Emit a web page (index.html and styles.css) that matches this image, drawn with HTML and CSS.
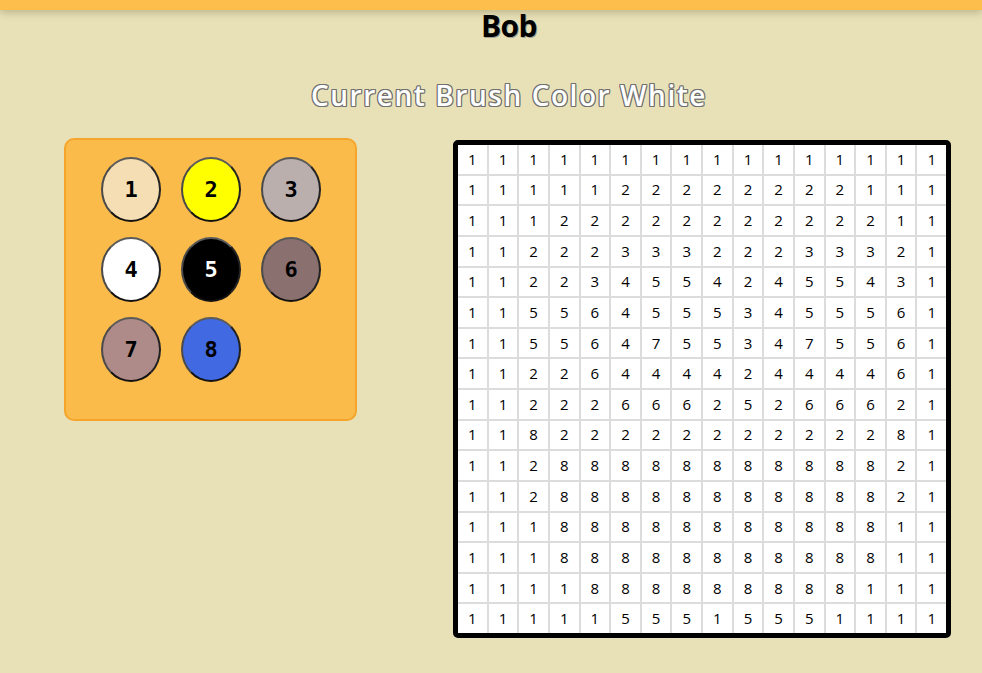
FILE: index.html
```html
<!DOCTYPE html>
<html lang="en">
<head>
<meta charset="utf-8">
<title>Bob</title>
<link rel="stylesheet" href="styles.css">
</head>
<body>
<header class="topbar"></header>
<main class="page">
  <h1 class="name">Bob</h1>
  <h2 class="brush">Current Brush Color White</h2>
  <div class="workspace">
    <div class="palette">
      <button class="swatch c1">1</button>
      <button class="swatch c2">2</button>
      <button class="swatch c3">3</button>
      <button class="swatch c4">4</button>
      <button class="swatch c5">5</button>
      <button class="swatch c6">6</button>
      <button class="swatch c7">7</button>
      <button class="swatch c8">8</button>
    </div>
    <div class="canvas">
      <div class="cell">1</div><div class="cell">1</div><div class="cell">1</div><div class="cell">1</div><div class="cell">1</div><div class="cell">1</div><div class="cell">1</div><div class="cell">1</div><div class="cell">1</div><div class="cell">1</div><div class="cell">1</div><div class="cell">1</div><div class="cell">1</div><div class="cell">1</div><div class="cell">1</div><div class="cell">1</div>
      <div class="cell">1</div><div class="cell">1</div><div class="cell">1</div><div class="cell">1</div><div class="cell">1</div><div class="cell">2</div><div class="cell">2</div><div class="cell">2</div><div class="cell">2</div><div class="cell">2</div><div class="cell">2</div><div class="cell">2</div><div class="cell">2</div><div class="cell">1</div><div class="cell">1</div><div class="cell">1</div>
      <div class="cell">1</div><div class="cell">1</div><div class="cell">1</div><div class="cell">2</div><div class="cell">2</div><div class="cell">2</div><div class="cell">2</div><div class="cell">2</div><div class="cell">2</div><div class="cell">2</div><div class="cell">2</div><div class="cell">2</div><div class="cell">2</div><div class="cell">2</div><div class="cell">1</div><div class="cell">1</div>
      <div class="cell">1</div><div class="cell">1</div><div class="cell">2</div><div class="cell">2</div><div class="cell">2</div><div class="cell">3</div><div class="cell">3</div><div class="cell">3</div><div class="cell">2</div><div class="cell">2</div><div class="cell">2</div><div class="cell">3</div><div class="cell">3</div><div class="cell">3</div><div class="cell">2</div><div class="cell">1</div>
      <div class="cell">1</div><div class="cell">1</div><div class="cell">2</div><div class="cell">2</div><div class="cell">3</div><div class="cell">4</div><div class="cell">5</div><div class="cell">5</div><div class="cell">4</div><div class="cell">2</div><div class="cell">4</div><div class="cell">5</div><div class="cell">5</div><div class="cell">4</div><div class="cell">3</div><div class="cell">1</div>
      <div class="cell">1</div><div class="cell">1</div><div class="cell">5</div><div class="cell">5</div><div class="cell">6</div><div class="cell">4</div><div class="cell">5</div><div class="cell">5</div><div class="cell">5</div><div class="cell">3</div><div class="cell">4</div><div class="cell">5</div><div class="cell">5</div><div class="cell">5</div><div class="cell">6</div><div class="cell">1</div>
      <div class="cell">1</div><div class="cell">1</div><div class="cell">5</div><div class="cell">5</div><div class="cell">6</div><div class="cell">4</div><div class="cell">7</div><div class="cell">5</div><div class="cell">5</div><div class="cell">3</div><div class="cell">4</div><div class="cell">7</div><div class="cell">5</div><div class="cell">5</div><div class="cell">6</div><div class="cell">1</div>
      <div class="cell">1</div><div class="cell">1</div><div class="cell">2</div><div class="cell">2</div><div class="cell">6</div><div class="cell">4</div><div class="cell">4</div><div class="cell">4</div><div class="cell">4</div><div class="cell">2</div><div class="cell">4</div><div class="cell">4</div><div class="cell">4</div><div class="cell">4</div><div class="cell">6</div><div class="cell">1</div>
      <div class="cell">1</div><div class="cell">1</div><div class="cell">2</div><div class="cell">2</div><div class="cell">2</div><div class="cell">6</div><div class="cell">6</div><div class="cell">6</div><div class="cell">2</div><div class="cell">5</div><div class="cell">2</div><div class="cell">6</div><div class="cell">6</div><div class="cell">6</div><div class="cell">2</div><div class="cell">1</div>
      <div class="cell">1</div><div class="cell">1</div><div class="cell">8</div><div class="cell">2</div><div class="cell">2</div><div class="cell">2</div><div class="cell">2</div><div class="cell">2</div><div class="cell">2</div><div class="cell">2</div><div class="cell">2</div><div class="cell">2</div><div class="cell">2</div><div class="cell">2</div><div class="cell">8</div><div class="cell">1</div>
      <div class="cell">1</div><div class="cell">1</div><div class="cell">2</div><div class="cell">8</div><div class="cell">8</div><div class="cell">8</div><div class="cell">8</div><div class="cell">8</div><div class="cell">8</div><div class="cell">8</div><div class="cell">8</div><div class="cell">8</div><div class="cell">8</div><div class="cell">8</div><div class="cell">2</div><div class="cell">1</div>
      <div class="cell">1</div><div class="cell">1</div><div class="cell">2</div><div class="cell">8</div><div class="cell">8</div><div class="cell">8</div><div class="cell">8</div><div class="cell">8</div><div class="cell">8</div><div class="cell">8</div><div class="cell">8</div><div class="cell">8</div><div class="cell">8</div><div class="cell">8</div><div class="cell">2</div><div class="cell">1</div>
      <div class="cell">1</div><div class="cell">1</div><div class="cell">1</div><div class="cell">8</div><div class="cell">8</div><div class="cell">8</div><div class="cell">8</div><div class="cell">8</div><div class="cell">8</div><div class="cell">8</div><div class="cell">8</div><div class="cell">8</div><div class="cell">8</div><div class="cell">8</div><div class="cell">1</div><div class="cell">1</div>
      <div class="cell">1</div><div class="cell">1</div><div class="cell">1</div><div class="cell">8</div><div class="cell">8</div><div class="cell">8</div><div class="cell">8</div><div class="cell">8</div><div class="cell">8</div><div class="cell">8</div><div class="cell">8</div><div class="cell">8</div><div class="cell">8</div><div class="cell">8</div><div class="cell">1</div><div class="cell">1</div>
      <div class="cell">1</div><div class="cell">1</div><div class="cell">1</div><div class="cell">1</div><div class="cell">8</div><div class="cell">8</div><div class="cell">8</div><div class="cell">8</div><div class="cell">8</div><div class="cell">8</div><div class="cell">8</div><div class="cell">8</div><div class="cell">8</div><div class="cell">1</div><div class="cell">1</div><div class="cell">1</div>
      <div class="cell">1</div><div class="cell">1</div><div class="cell">1</div><div class="cell">1</div><div class="cell">1</div><div class="cell">5</div><div class="cell">5</div><div class="cell">5</div><div class="cell">1</div><div class="cell">5</div><div class="cell">5</div><div class="cell">5</div><div class="cell">1</div><div class="cell">1</div><div class="cell">1</div><div class="cell">1</div>
    </div>
  </div>
</main>
</body>
</html>
```

FILE: styles.css
```css
html, body {
  margin: 0;
  padding: 0;
}

body {
  background: #e8e1b7;
  font-family: "Open Sans", "Noto Sans", sans-serif;
  color: #000;
  height: 673px;
  overflow: hidden;
}

.topbar {
  height: 10px;
  background: #fdbe4b;
  box-shadow: 0 2px 8px rgba(90, 80, 40, 0.35);
  position: relative;
}

.page {
  padding-left: 36px;
}

.name {
  margin: 0;
  text-align: center;
  font-size: 30px;
  line-height: 32px;
  font-weight: 700;
  letter-spacing: -0.5px;
  text-shadow: 1px 1px 0 rgba(20, 40, 80, 0.35);
}

.brush {
  margin: 34px 0 0;
  text-align: center;
  font-size: 28px;
  line-height: 38px;
  font-weight: 600;
  letter-spacing: 1.55px;
  color: #fff;
  text-shadow:
    -1px -1px 0 #707070,
    1px -1px 0 #707070,
    -1px 1px 0 #707070,
    1px 1px 0 #707070,
    0 1px 0 #707070,
    0 -1px 0 #707070,
    1px 0 0 #707070,
    -1px 0 0 #707070;
}

.workspace {
  display: flex;
  align-items: flex-start;
  margin-top: 24px;
  padding-left: 28px;
  gap: 96px;
}

.palette {
  box-sizing: border-box;
  width: 293px;
  height: 283px;
  background: #fbbb4b;
  border: 2px solid #f5a52c;
  border-radius: 10px;
  padding: 17px 0 0 35px;
  display: grid;
  grid-template-columns: repeat(3, 60px);
  grid-auto-rows: 65px;
  column-gap: 20px;
  row-gap: 15px;
  align-content: start;
}

.swatch {
  box-sizing: border-box;
  width: 60px;
  height: 65px;
  margin: 0;
  padding: 0;
  border-radius: 50%;
  border: 2px solid;
  border-color: #5a5a5a #222 #111 #4a4a4a;
  font-family: "DejaVu Sans Mono", "Liberation Mono", monospace;
  font-weight: 700;
  font-size: 22px;
  color: #000;
  cursor: pointer;
}

.c1 { background: #f5deb3; }
.c2 { background: #ffff00; }
.c3 { background: #bbafad; }
.c4 { background: #ffffff; }
.c5 { background: #000000; color: #fff; }
.c6 { background: #8b7070; }
.c7 { background: #ae8b88; }
.c8 { background: #4169e1; }

.canvas {
  margin-top: 2px;
  width: 488px;
  height: 488px;
  border: 5px solid #000;
  border-radius: 5px;
  background: #dcdcdc;
  display: grid;
  grid-template-columns: repeat(16, 1fr);
  grid-template-rows: repeat(16, 1fr);
  gap: 2px;
}

.cell {
  background: #fff;
  display: flex;
  align-items: center;
  justify-content: center;
  font-size: 15px;
  line-height: 1;
  color: #000;
}
```
